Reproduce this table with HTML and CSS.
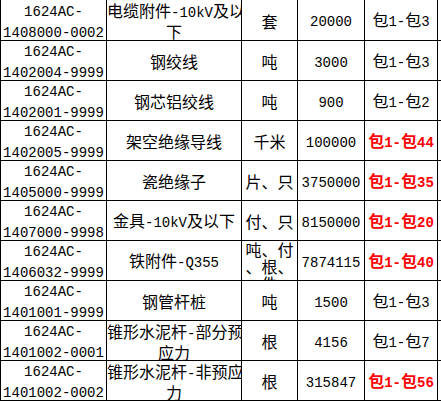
FILE: index.html
```html
<!DOCTYPE html>
<html lang="zh-CN">
<head>
<meta charset="utf-8">
<title>材料清单</title>
<link rel="stylesheet" href="styles.css">
</head>
<body>
<div class="page">
  <div class="sheet">
    <div class="cell"><div class="txt"><span class="en">1624AC-</span><br><span class="en">1408000-0002</span></div></div>
    <div class="cell"><div class="txt">电缆附件<span class="en">-10kV</span>及以<br>下</div></div>
    <div class="cell"><div class="txt">套</div></div>
    <div class="cell"><div class="txt"><span class="en">20000</span></div></div>
    <div class="cell"><div class="txt">包<span class="en">1-</span>包<span class="en">3</span></div></div>
    <div class="cell"></div>

    <div class="cell"><div class="txt"><span class="en">1624AC-</span><br><span class="en">1402004-9999</span></div></div>
    <div class="cell"><div class="txt">钢绞线</div></div>
    <div class="cell"><div class="txt">吨</div></div>
    <div class="cell"><div class="txt"><span class="en">3000</span></div></div>
    <div class="cell"><div class="txt">包<span class="en">1-</span>包<span class="en">3</span></div></div>
    <div class="cell"></div>

    <div class="cell"><div class="txt"><span class="en">1624AC-</span><br><span class="en">1402001-9999</span></div></div>
    <div class="cell"><div class="txt">钢芯铝绞线</div></div>
    <div class="cell"><div class="txt">吨</div></div>
    <div class="cell"><div class="txt"><span class="en">900</span></div></div>
    <div class="cell"><div class="txt">包<span class="en">1-</span>包<span class="en">2</span></div></div>
    <div class="cell"></div>

    <div class="cell"><div class="txt"><span class="en">1624AC-</span><br><span class="en">1402005-9999</span></div></div>
    <div class="cell"><div class="txt">架空绝缘导线</div></div>
    <div class="cell"><div class="txt">千米</div></div>
    <div class="cell"><div class="txt"><span class="en">100000</span></div></div>
    <div class="cell"><div class="txt red">包<span class="en">1-</span>包<span class="en">44</span></div></div>
    <div class="cell"></div>

    <div class="cell"><div class="txt"><span class="en">1624AC-</span><br><span class="en">1405000-9999</span></div></div>
    <div class="cell"><div class="txt">瓷绝缘子</div></div>
    <div class="cell"><div class="txt">片、只</div></div>
    <div class="cell"><div class="txt"><span class="en">3750000</span></div></div>
    <div class="cell"><div class="txt red">包<span class="en">1-</span>包<span class="en">35</span></div></div>
    <div class="cell"></div>

    <div class="cell"><div class="txt"><span class="en">1624AC-</span><br><span class="en">1407000-9998</span></div></div>
    <div class="cell"><div class="txt">金具<span class="en">-10kV</span>及以下</div></div>
    <div class="cell"><div class="txt">付、只</div></div>
    <div class="cell"><div class="txt"><span class="en">8150000</span></div></div>
    <div class="cell"><div class="txt red">包<span class="en">1-</span>包<span class="en">20</span></div></div>
    <div class="cell"></div>

    <div class="cell"><div class="txt"><span class="en">1624AC-</span><br><span class="en">1406032-9999</span></div></div>
    <div class="cell"><div class="txt">铁附件<span class="en">-Q355</span></div></div>
    <div class="cell top"><div class="txt">吨、付<br>、根、<br>件</div></div>
    <div class="cell"><div class="txt"><span class="en">7874115</span></div></div>
    <div class="cell"><div class="txt red">包<span class="en">1-</span>包<span class="en">40</span></div></div>
    <div class="cell"></div>

    <div class="cell"><div class="txt"><span class="en">1624AC-</span><br><span class="en">1401001-9999</span></div></div>
    <div class="cell"><div class="txt">钢管杆桩</div></div>
    <div class="cell"><div class="txt">吨</div></div>
    <div class="cell"><div class="txt"><span class="en">1500</span></div></div>
    <div class="cell"><div class="txt">包<span class="en">1-</span>包<span class="en">3</span></div></div>
    <div class="cell"></div>

    <div class="cell"><div class="txt"><span class="en">1624AC-</span><br><span class="en">1401002-0001</span></div></div>
    <div class="cell"><div class="txt">锥形水泥杆<span class="en">-</span>部分预<br>应力</div></div>
    <div class="cell"><div class="txt">根</div></div>
    <div class="cell"><div class="txt"><span class="en">4156</span></div></div>
    <div class="cell"><div class="txt">包<span class="en">1-</span>包<span class="en">7</span></div></div>
    <div class="cell"></div>

    <div class="cell"><div class="txt"><span class="en">1624AC-</span><br><span class="en">1401002-0002</span></div></div>
    <div class="cell"><div class="txt">锥形水泥杆<span class="en">-</span>非预应<br>力</div></div>
    <div class="cell"><div class="txt">根</div></div>
    <div class="cell"><div class="txt"><span class="en">315847</span></div></div>
    <div class="cell"><div class="txt red">包<span class="en">1-</span>包<span class="en">56</span></div></div>
    <div class="cell"></div>
  </div>
</div>
</body>
</html>
```

FILE: styles.css
```css
html, body {
  margin: 0;
  padding: 0;
  background: #fff;
}

.page {
  width: 441px;
  height: 401px;
  overflow: hidden;
  background: #fff;
}

.sheet {
  display: grid;
  grid-template-columns: 105px 134px 55px 66px 72px 20px;
  grid-template-rows: 40px repeat(9, 39px);
  gap: 1px;
  padding: 0 0 1px 1px;
  width: max-content;
  background: #000;
  font-family: "Noto Sans CJK SC", sans-serif;
  font-size: 16px;
  line-height: 18px;
  color: #000;
}

.cell {
  background: #fff;
  display: flex;
  align-items: center;
  overflow: hidden;
  min-width: 0;
  padding-top: 1px;
}

.cell.top {
  align-items: flex-start;
  padding-top: 0;
  line-height: 17px;
}

.txt {
  width: 100%;
  text-align: center;
  white-space: nowrap;
}

.en {
  font-family: "Liberation Mono", "DejaVu Sans Mono", monospace;
  font-size: 14px;
}

.red {
  color: #ff0000;
  font-weight: bold;
}
```
